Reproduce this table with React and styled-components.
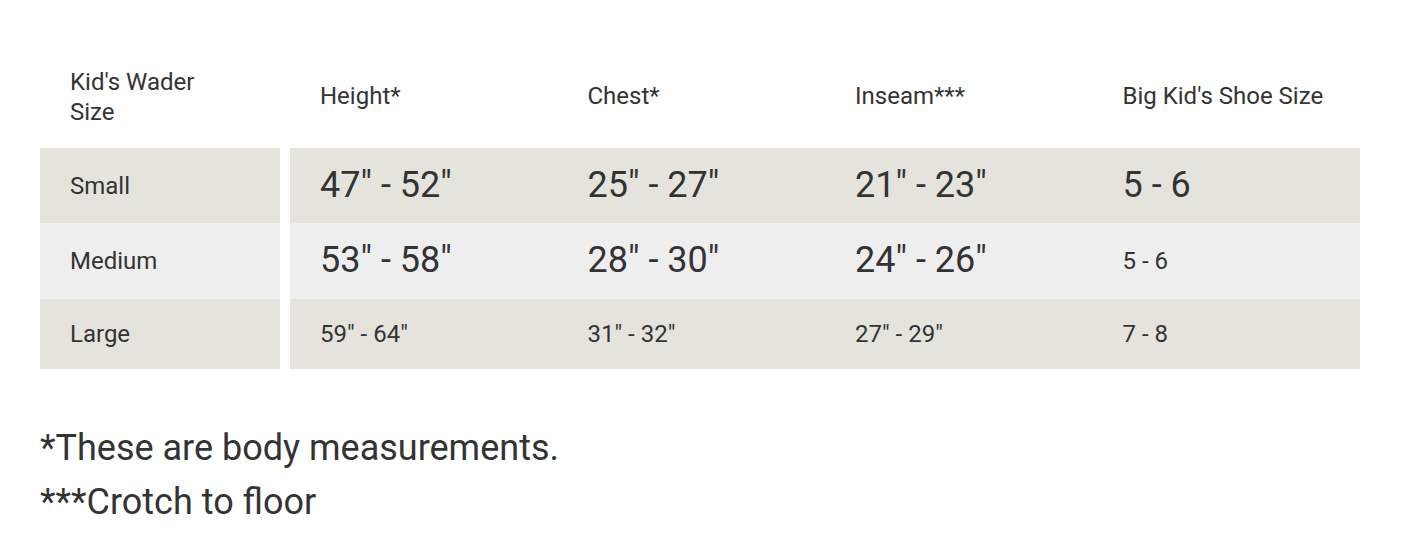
import React from 'react';
import styled, { createGlobalStyle } from 'styled-components';

const GlobalStyle = createGlobalStyle`
   body {
      margin: 0;
      background: #fff;
      font-family: Roboto, 'Liberation Sans', sans-serif;
      color: #333;
   }
`;

const PageStyled = styled.div`
   padding: 45px 44px 0 40px;
`;

const TableStyled = styled.div`
   display: flex;
   flex-direction: column;
`;

const RowStyled = styled.div`
   display: flex;
   height: ${(p) => p.$height}px;
`;

const LabelCell = styled.div`
   display: flex;
   align-items: center;
   width: 240px;
   margin-right: 10px;
   padding-left: 30px;
   box-sizing: border-box;
   font-size: 24px;
   line-height: 30px;
   background: ${(p) => p.$bg || 'transparent'};
`;

const ValueGroup = styled.div`
   flex: 1;
   display: grid;
   grid-template-columns: repeat(4, 1fr);
   background: ${(p) => p.$bg || 'transparent'};
`;

const ValueCell = styled.div`
   display: flex;
   align-items: center;
   padding-left: 30px;
   font-size: ${(p) => (p.$big ? 36 : 24)}px;
   line-height: 1.2;
`;

const NotesStyled = styled.div`
   margin-top: 52px;
   font-size: 36px;
   line-height: 54px;
`;

const BEIGE = '#e4e4dd';
const GREY = '#eeeeee';

const rows = [
   {
      label: 'Small',
      bg: BEIGE,
      height: 75,
      values: [
         { text: '47" - 52"', big: true },
         { text: '25" - 27"', big: true },
         { text: '21" - 23"', big: true },
         { text: '5 - 6', big: true },
      ],
   },
   {
      label: 'Medium',
      bg: GREY,
      height: 76,
      values: [
         { text: '53" - 58"', big: true },
         { text: '28" - 30"', big: true },
         { text: '24" - 26"', big: true },
         { text: '5 - 6' },
      ],
   },
   {
      label: 'Large',
      bg: BEIGE,
      height: 70,
      values: [
         { text: '59" - 64"' },
         { text: '31" - 32"' },
         { text: '27" - 29"' },
         { text: '7 - 8' },
      ],
   },
];

const headers = ['Height*', 'Chest*', 'Inseam***', "Big Kid's Shoe Size"];

export default function App() {
   return (
      <>
         <GlobalStyle />
         <PageStyled>
            <TableStyled>
               <RowStyled $height={103}>
                  <LabelCell>
                     Kid's Wader
                     <br />
                     Size
                  </LabelCell>
                  <ValueGroup>
                     {headers.map((h) => (
                        <ValueCell key={h}>{h}</ValueCell>
                     ))}
                  </ValueGroup>
               </RowStyled>
               {rows.map((row) => (
                  <RowStyled key={row.label} $height={row.height}>
                     <LabelCell $bg={row.bg}>{row.label}</LabelCell>
                     <ValueGroup $bg={row.bg}>
                        {row.values.map((v, i) => (
                           <ValueCell key={i} $big={v.big}>
                              {v.text}
                           </ValueCell>
                        ))}
                     </ValueGroup>
                  </RowStyled>
               ))}
            </TableStyled>
            <NotesStyled>
               <div>*These are body measurements.</div>
               <div>***Crotch to floor</div>
            </NotesStyled>
         </PageStyled>
      </>
   );
}
